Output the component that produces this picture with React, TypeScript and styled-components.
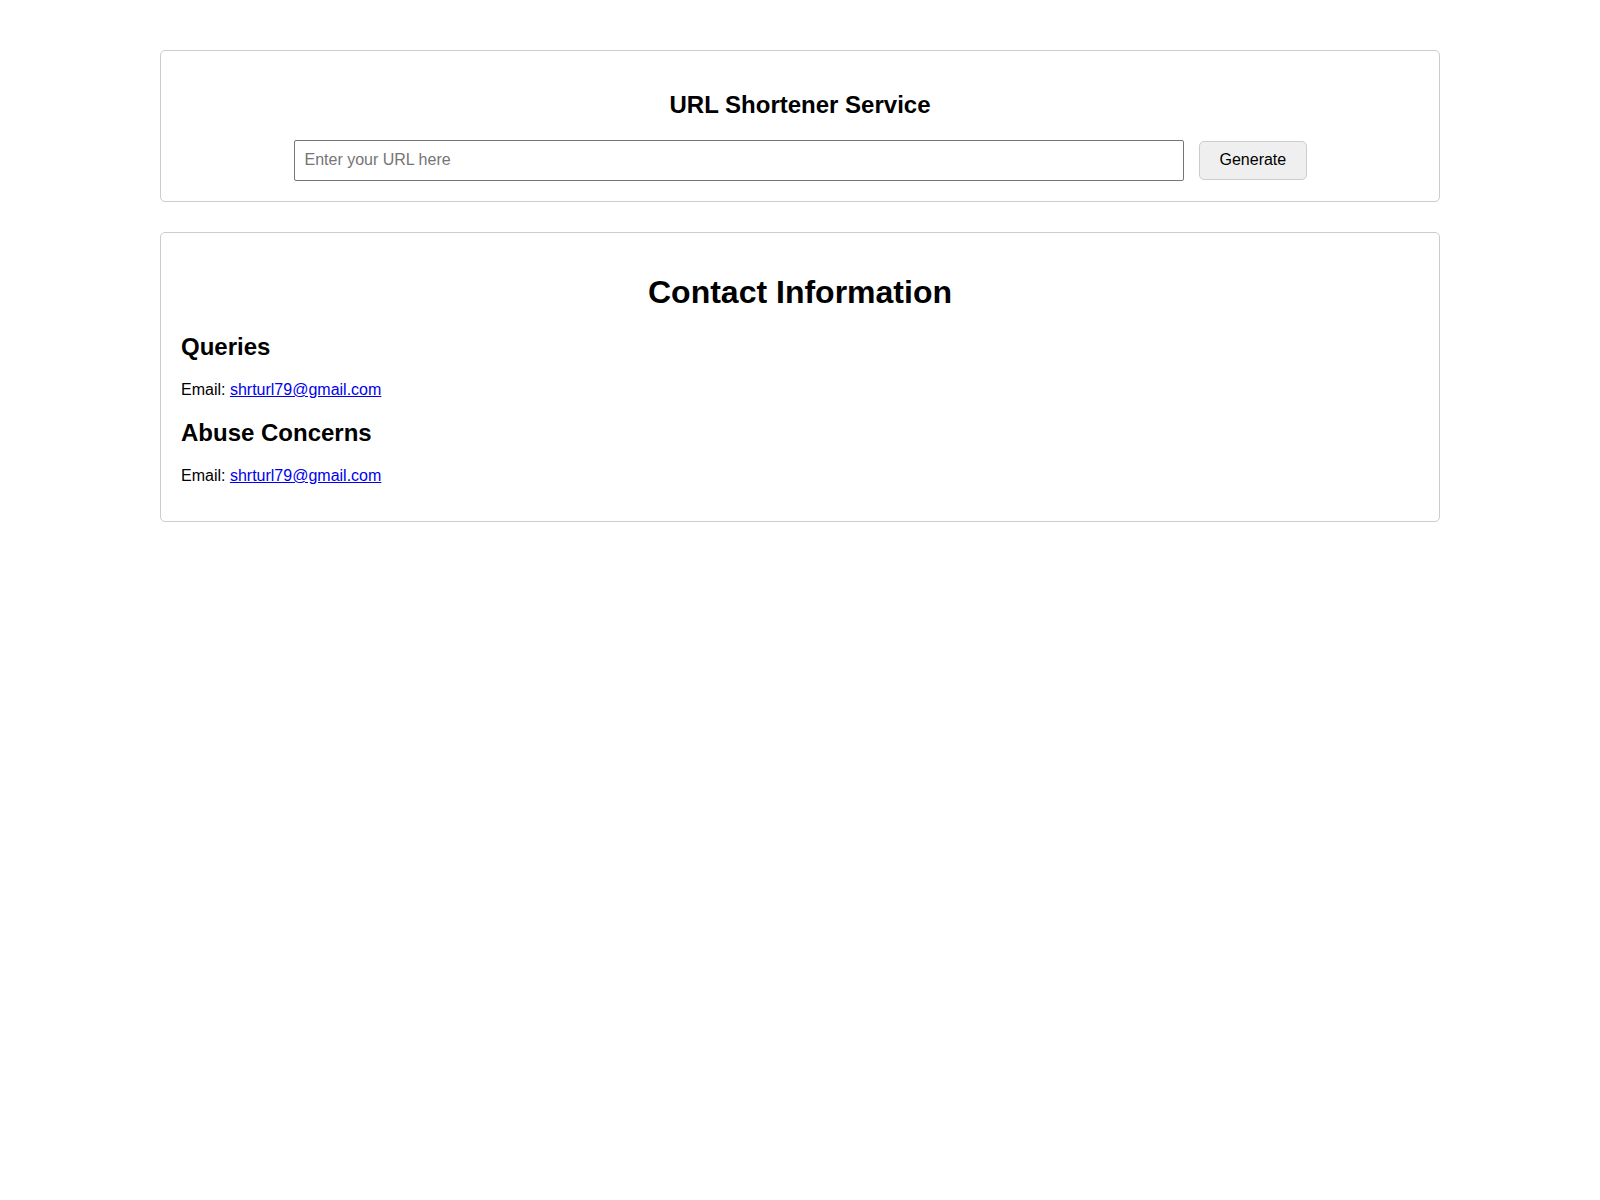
import React from "react";
import styled, { createGlobalStyle } from "styled-components";

const GlobalStyle = createGlobalStyle`
  html, body {
    margin: 0;
    padding: 0;
    background: #ffffff;
  }
  body {
    font-family: "Liberation Sans", Arial, sans-serif;
    color: #000000;
  }
  * { box-sizing: border-box; }
`;

const Page = styled.main`
  width: 1280px;
  margin: 0 auto;
  padding-top: 50px;
  display: flex;
  flex-direction: column;
  gap: 30px;
`;

const Card = styled.section`
  border: 1px solid #cccccc;
  border-radius: 5px;
  padding: 20px;
  background: #ffffff;
`;

const ServiceTitle = styled.h2`
  font-size: 24px;
  font-weight: bold;
  text-align: center;
  margin: 20px 0 21px;
  line-height: 27.6px;
`;

const Row = styled.form`
  display: flex;
  align-items: center;
  justify-content: center;
  gap: 15px;
`;

const UrlInput = styled.input`
  width: 890px;
  height: 41px;
  padding: 0 10px;
  font-family: "Liberation Sans", Arial, sans-serif;
  font-size: 16px;
  color: #000;
  border: 1px solid #767676;
  border-radius: 2px;
  outline: none;
  &::placeholder {
    color: #757575;
  }
`;

const GenerateButton = styled.button`
  width: 108px;
  height: 39px;
  padding: 0 20px;
  font-family: "Liberation Sans", Arial, sans-serif;
  font-size: 16px;
  color: #000;
  background: #efefef;
  border: 1px solid #cccccc;
  border-radius: 5px;
  cursor: pointer;
`;

const ContactTitle = styled.h1`
  font-size: 32px;
  font-weight: bold;
  text-align: center;
  margin: 21px 0 23px;
  line-height: 36.8px;
`;

const SectionTitle = styled.h2`
  font-size: 24px;
  font-weight: bold;
  margin: 20px 0;
  line-height: 27.6px;
  &:first-of-type {
    margin-top: 23px;
  }
`;

const Line = styled.p`
  font-size: 16px;
  margin: 16px 0;
  line-height: 18.4px;
`;

const MailLink = styled.a`
  color: #0000ee;
  text-decoration: underline;
`;

export default function App() {
  return (
    <>
      <GlobalStyle />
      <Page>
        <Card>
          <ServiceTitle>URL Shortener Service</ServiceTitle>
          <Row onSubmit={(e) => e.preventDefault()}>
            <UrlInput type="text" placeholder="Enter your URL here" />
            <GenerateButton type="submit">Generate</GenerateButton>
          </Row>
        </Card>
        <Card>
          <ContactTitle>Contact Information</ContactTitle>
          <SectionTitle>Queries</SectionTitle>
          <Line>
            Email: <MailLink href="mailto:shrturl79@gmail.com">shrturl79@gmail.com</MailLink>
          </Line>
          <SectionTitle>Abuse Concerns</SectionTitle>
          <Line>
            Email: <MailLink href="mailto:shrturl79@gmail.com">shrturl79@gmail.com</MailLink>
          </Line>
        </Card>
      </Page>
    </>
  );
}
